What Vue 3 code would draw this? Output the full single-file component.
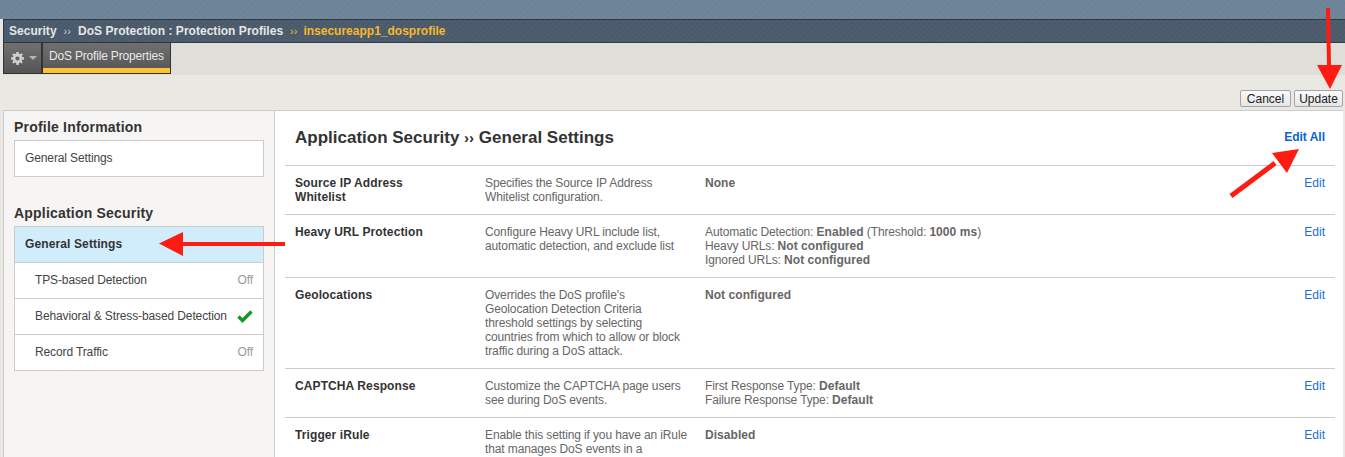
<script setup>
const sideItems = [
  { label: 'TPS-based Detection', state: 'Off' },
  { label: 'Behavioral & Stress-based Detection', state: 'check' },
  { label: 'Record Traffic', state: 'Off' },
]

const rows = [
  {
    name: 'Source IP Address Whitelist',
    desc: ['Specifies the Source IP Address', 'Whitelist configuration.'],
    lines: [[['None', true]]],
  },
  {
    name: 'Heavy URL Protection',
    desc: ['Configure Heavy URL include list,', 'automatic detection, and exclude list'],
    lines: [
      [['Automatic Detection: ', false], ['Enabled', true], [' (Threshold: ', false], ['1000 ms', true], [')', false]],
      [['Heavy URLs: ', false], ['Not configured', true]],
      [['Ignored URLs: ', false], ['Not configured', true]],
    ],
  },
  {
    name: 'Geolocations',
    desc: [
      "Overrides the DoS profile's",
      'Geolocation Detection Criteria',
      'threshold settings by selecting',
      'countries from which to allow or block',
      'traffic during a DoS attack.',
    ],
    lines: [[['Not configured', true]]],
  },
  {
    name: 'CAPTCHA Response',
    desc: ['Customize the CAPTCHA page users', 'see during DoS events.'],
    lines: [
      [['First Response Type: ', false], ['Default', true]],
      [['Failure Response Type: ', false], ['Default', true]],
    ],
  },
  {
    name: 'Trigger iRule',
    desc: ['Enable this setting if you have an iRule', 'that manages DoS events in a'],
    lines: [[['Disabled', true]]],
  },
]
</script>

<template>
  <div class="page">
    <div class="banner"></div>
    <div class="crumbs">
      <span>Security</span>
      <span class="sep">››</span>
      <span>DoS Protection : Protection Profiles</span>
      <span class="sep gold">››</span>
      <span class="gold">insecureapp1_dosprofile</span>
    </div>
    <div class="tabs">
      <div class="gear-tab">
        <svg width="13" height="13" viewBox="0 0 13 13">
          <path fill="#cfcfcf" fill-rule="evenodd" d="M5.4 0h2.2l.3 1.8 1.1.5L10.600 1.200l1.200 1.200-1.100 1.500.5 1.100 1.800.3v2.200l-1.800.3-.5 1.100 1.100 1.500-1.200 1.200-1.500-1.100-1.100.5-.3 1.900H5.400l-.3-1.900-1.100-.5-1.500 1.100-1.300-1.200 1.100-1.500-.5-1.100L0 7.600V5.400l1.800-.3.5-1.100-1.100-1.600 1.300-1.200 1.500 1.100 1.100-.5zM6.500 4.400a2.100 2.100 0 1 0 0 4.200a2.100 2.100 0 0 0 0-4.200z" />
        </svg>
        <span class="caret"></span>
      </div>
      <div class="prop-tab">DoS Profile Properties</div>
    </div>
    <div class="toolbar">
      <button class="btn" type="button">Cancel</button>
      <button class="btn" type="button">Update</button>
    </div>
    <div class="main">
      <aside class="side">
        <h3>Profile Information</h3>
        <ul class="menu">
          <li class="item">General Settings</li>
        </ul>
        <h3 class="second">Application Security</h3>
        <ul class="menu">
          <li class="item active">General Settings</li>
          <li v-for="it in sideItems" :key="it.label" class="item sub">
            <span>{{ it.label }}</span>
            <svg v-if="it.state === 'check'" class="check" width="16" height="13" viewBox="0 0 16 13">
              <path fill="none" stroke="#129a25" stroke-width="3.400" d="M1.500 6.500l4 4L14.500 1.500" />
            </svg>
            <span v-else class="off">{{ it.state }}</span>
          </li>
        </ul>
      </aside>
      <section class="content">
        <header class="head">
          <h2>Application Security <span class="arrow-sep">››</span> General Settings</h2>
          <a class="edit-all">Edit All</a>
        </header>
        <div v-for="r in rows" :key="r.name" class="row">
          <div class="name">{{ r.name }}</div>
          <div class="desc">
            <div v-for="d in r.desc" :key="d">{{ d }}</div>
          </div>
          <div class="value">
            <div v-for="(line, i) in r.lines" :key="i">
              <template v-for="(part, j) in line" :key="j">
                <b v-if="part[1]">{{ part[0] }}</b>
                <template v-else>{{ part[0] }}</template>
              </template>
            </div>
          </div>
          <a class="edit">Edit</a>
        </div>
      </section>
    </div>
    <svg class="arrows" width="1345" height="457" viewBox="0 0 1345 457">
      <g fill="#fe1b12" stroke="#fe1b12">
        <path stroke-width="4" d="M1328 8l1 58" />
        <path stroke-width="0" d="M1317 65h25l-12 24z" />
        <path stroke-width="5" d="M1231 196l44-33" />
        <path stroke-width="0" d="M1272 153l27-4-12 24z" />
        <path stroke-width="4" d="M285 244h-105" />
        <path stroke-width="0" d="M183 232v24l-24-12.500z" />
      </g>
    </svg>
  </div>
</template>

<style>
html,
body {
  margin: 0;
  overflow: hidden;
}
</style>

<style scoped>
.page {
  position: relative;
  width: 1345px;
  height: 457px;
  overflow: hidden;
  background: #e9e8e3;
  font-family: 'Liberation Sans', Arial, sans-serif;
  font-size: 12px;
  line-height: 14px;
  letter-spacing: -0.12px;
  color: #444;
}

.banner {
  height: 19px;
  background: repeating-linear-gradient(135deg, #6c8398 0 2px, #70879b 2px 4px);
}

.crumbs {
  display: flex;
  align-items: center;
  height: 22px;
  margin-left: 3px;
  padding-left: 5px;
  border-top: 1px solid #2f3a44;
  border-bottom: 1px solid #2f3a44;
  border-left: 1px solid #2f3a44;
  background: repeating-linear-gradient(135deg, #4a5a6a 0 2px, #4e5e6e 2px 4px);
  color: #e6e6e6;
  font-weight: 700;
  letter-spacing: 0.03px;
}

.sep {
  margin: 0 7px;
  font-weight: 400;
  font-size: 11px;
  color: #ccc;
}

.crumbs .gold {
  color: #f7b92a;
  letter-spacing: 0;
}

.crumbs .sep.gold {
  margin-right: 6px;
}

.tabs {
  display: flex;
  height: 32px;
  margin-left: 3px;
  background: #dfded9;
}

.gear-tab,
.prop-tab {
  box-sizing: border-box;
  height: 32px;
  margin-top: -1px;
  border: 1px solid #333;
  background: linear-gradient(#707070, #555);
}

.gear-tab {
  display: flex;
  align-items: center;
  gap: 5px;
  width: 39px;
  padding-left: 7px;
}

.caret {
  width: 0;
  height: 0;
  border-top: 4px solid #b5b5b5;
  border-right: 4px solid transparent;
  border-left: 4px solid transparent;
}

.prop-tab {
  width: 129px;
  padding: 6px 0 0 6px;
  color: #e8e8e8;
  letter-spacing: -0.18px;
  box-shadow: inset 0 -5px 0 #fcc52f;
}

.toolbar {
  display: flex;
  justify-content: flex-end;
  align-items: flex-end;
  gap: 3px;
  box-sizing: border-box;
  height: 35px;
  padding: 0 2px 3px 0;
}

.btn {
  width: 51px;
  height: 17px;
  padding: 0;
  border: 1px solid #a5a5a5;
  border-radius: 2px;
  background: linear-gradient(#fafafa, #e6e6e6);
  color: #222;
  font: inherit;
  letter-spacing: 0;
}

.btn + .btn {
  width: 49px;
}

.main {
  display: flex;
  height: 347px;
  margin: 0 2px 0 3px;
  border-top: 1px solid #ccc;
}

.side {
  box-sizing: border-box;
  width: 272px;
  padding: 0 10px;
  border-left: 1px solid #ccc;
  border-right: 1px solid #ccc;
  background: #f6f5f3;
}

.side h3 {
  margin: 8px 0 5px;
  font-size: 14px;
  line-height: 16px;
  letter-spacing: 0.2px;
  color: #333;
}

.side h3.second {
  margin-top: 28px;
}

.menu {
  margin: 0;
  padding: 0;
  border: 1px solid #ccc;
  background: #fff;
  list-style: none;
}

.item {
  display: flex;
  align-items: center;
  justify-content: space-between;
  box-sizing: border-box;
  height: 35px;
  padding: 0 10px 2px;
  color: #444;
}

.item + .item {
  height: 36px;
  border-top: 1px solid #ccc;
}

.item.active {
  background: #d1edfc;
  font-weight: 700;
  letter-spacing: 0.12px;
  color: #333;
}

.item.sub {
  padding-left: 20px;
}

.check {
  margin-top: 2px;
}

.off {
  color: #999;
}

.content {
  flex: 1;
  padding: 0 8px 0 10px;
  background: #fff;
}

.head {
  display: flex;
  align-items: center;
  justify-content: space-between;
  box-sizing: border-box;
  height: 54px;
  padding: 0 10px;
}

.head h2 {
  margin: 0;
  font-size: 17px;
  line-height: 20px;
  letter-spacing: 0;
  color: #333;
}

.arrow-sep {
  font-size: 15px;
}

.edit-all {
  margin-top: -2px;
  color: #0a64c8;
  font-weight: 700;
  letter-spacing: -0.02px;
}

.row {
  display: grid;
  grid-template-columns: 190px 220px 1fr auto;
  padding: 10px;
  border-top: 1px solid #ccc;
}

.name {
  width: 130px;
  font-weight: 700;
  letter-spacing: 0.1px;
  color: #333;
}

.desc {
  color: #666;
}

.value {
  color: #666;
}

.value b {
  letter-spacing: 0.05px;
}

.edit {
  color: #1a6fd0;
  letter-spacing: 0;
}

.arrows {
  position: absolute;
  top: 0;
  left: 0;
  pointer-events: none;
}
</style>
